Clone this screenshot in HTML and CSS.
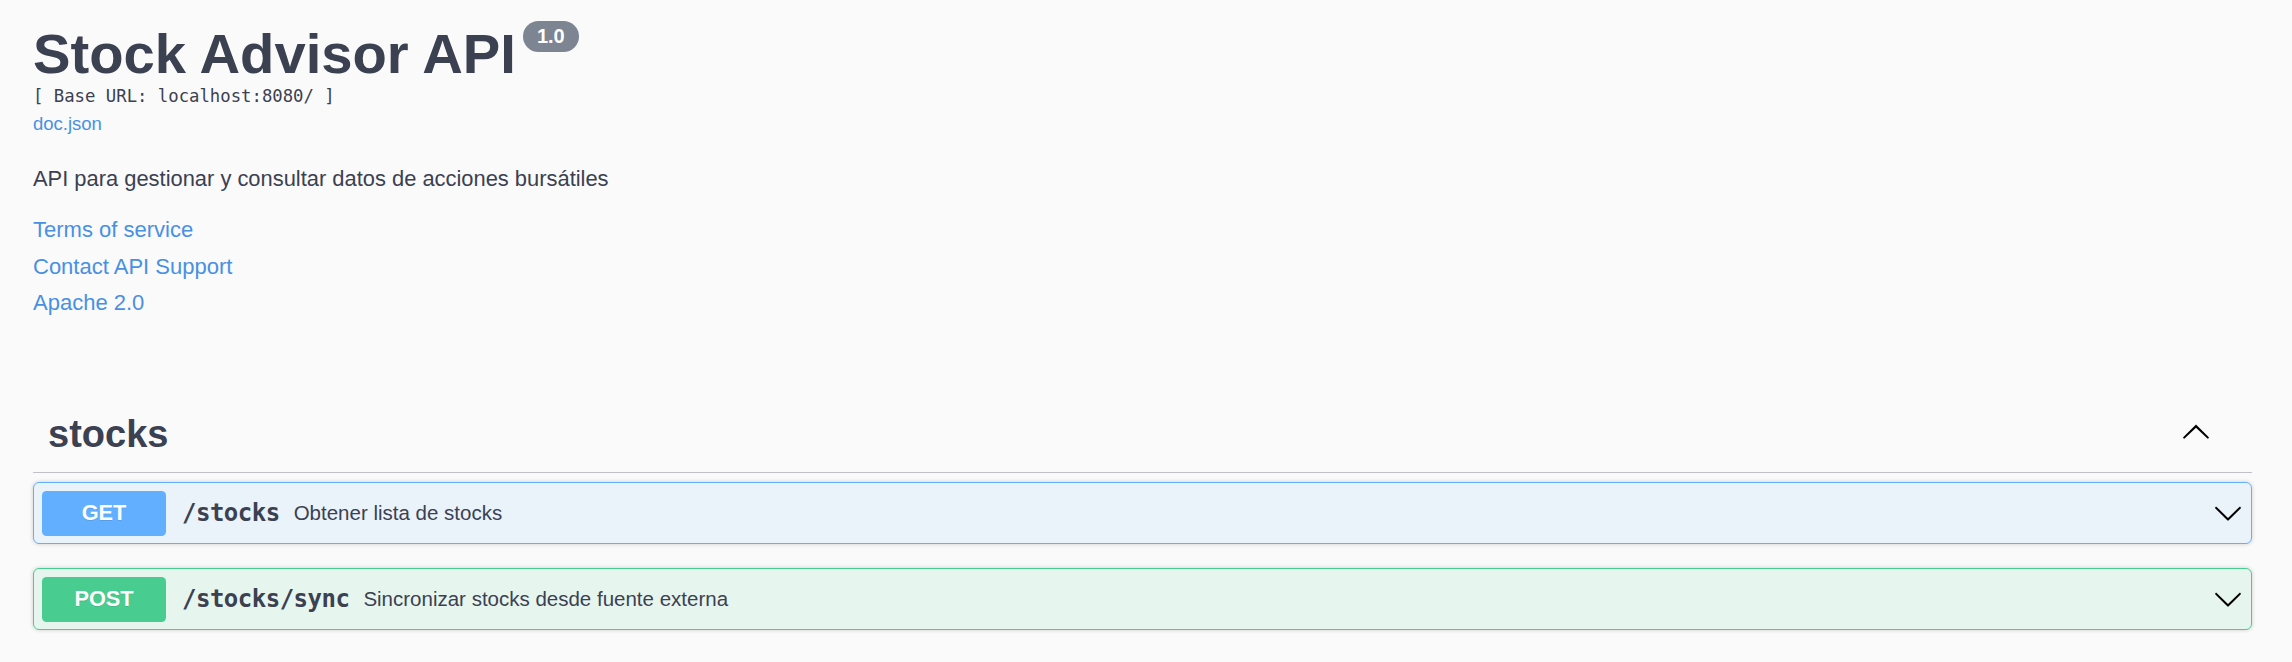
FILE: index.html
```html
<!DOCTYPE html>
<html lang="es">
<head>
<meta charset="utf-8">
<title>Stock Advisor API</title>
<link rel="stylesheet" href="styles.css">
</head>
<body>
<div class="page">
  <section class="info">
    <h2 class="title"><span class="title-text">Stock Advisor API</span><span class="version">1.0</span></h2>
    <pre class="base-url">[ Base URL: localhost:8080/ ]</pre>
    <a class="spec-link" href="#">doc.json</a>
    <p class="description">API para gestionar y consultar datos de acciones bursátiles</p>
    <div class="info-links">
      <a href="#">Terms of service</a>
      <a href="#">Contact API Support</a>
      <a href="#">Apache 2.0</a>
    </div>
  </section>

  <section class="tag-section">
    <h3 class="tag">
      <span class="tag-name">stocks</span>
      <button class="expand" type="button" aria-label="Collapse">
        <svg class="arrow" viewBox="0 0 20 20"><path d="M17.418 14.908c.272.268.709.268.979 0s.271-.701 0-.969l-7.908-7.83c-.27-.268-.707-.268-.979 0l-7.908 7.83c-.27.268-.27.701 0 .969.271.268.709.268.979 0L10 7.767l7.418 7.141z"/></svg>
      </button>
    </h3>

    <div class="opblock opblock-get">
      <span class="method">GET</span>
      <span class="path">/stocks</span>
      <span class="summary-desc">Obtener lista de stocks</span>
      <svg class="arrow" viewBox="0 0 20 20"><path d="M17.418 6.109c.272-.268.709-.268.979 0s.271.701 0 .969l-7.908 7.83c-.27.268-.707.268-.979 0l-7.908-7.83c-.27-.268-.27-.701 0-.969.271-.268.709-.268.979 0L10 13.25l7.418-7.141z"/></svg>
    </div>

    <div class="opblock opblock-post">
      <span class="method">POST</span>
      <span class="path">/stocks/sync</span>
      <span class="summary-desc">Sincronizar stocks desde fuente externa</span>
      <svg class="arrow" viewBox="0 0 20 20"><path d="M17.418 6.109c.272-.268.709-.268.979 0s.271.701 0 .969l-7.908 7.83c-.27.268-.707.268-.979 0l-7.908-7.83c-.27-.268-.27-.701 0-.969.271-.268.709-.268.979 0L10 13.25l7.418-7.141z"/></svg>
    </div>
  </section>
</div>
</body>
</html>
```

FILE: styles.css
```css
* {
  box-sizing: border-box;
}

body {
  margin: 0;
  background: #fafafa;
  font-family: "Liberation Sans", Arial, sans-serif;
  color: #3b4151;
}

.page {
  padding: 22px 40px 30px 33px;
}

.title {
  margin: 0;
  display: flex;
  align-items: flex-start;
  font-size: 56.2px;
  line-height: 64px;
  font-weight: 700;
  color: #3b4151;
}

.version {
  margin: -1px 0 0 7px;
  height: 31px;
  padding: 0 14px;
  border-radius: 16px;
  background: #7d8492;
  color: #fff;
  font-size: 20px;
  line-height: 31px;
  font-weight: 700;
}

.base-url {
  margin: 0;
  font-family: "DejaVu Sans Mono", monospace;
  font-size: 17.3px;
  line-height: 20px;
  color: #3b4151;
}

.spec-link {
  display: block;
  margin-top: 7px;
  width: max-content;
  font-size: 18.5px;
  line-height: 21px;
  color: #4990e2;
  text-decoration: none;
}

.description {
  margin: 32px 0 0;
  font-size: 21.9px;
  line-height: 26px;
  color: #3b4151;
}

.info-links {
  margin-top: 20px;
  display: flex;
  flex-direction: column;
  align-items: flex-start;
}

.info-links a {
  font-size: 22px;
  line-height: 36.7px;
  color: #4990e2;
  text-decoration: none;
}

.tag-section {
  margin-top: 76px;
}

.tag {
  margin: 0;
  display: flex;
  align-items: center;
  justify-content: space-between;
  padding: 15px 30px 17px 15px;
  border-bottom: 1px solid rgba(59, 65, 81, 0.3);
  font-size: 38px;
  line-height: 42px;
  font-weight: 700;
  color: #3b4151;
}

.expand {
  display: flex;
  margin: 0 11px 6px 0;
  padding: 0;
  border: 0;
  background: none;
}

.arrow {
  width: 30px;
  height: 30px;
  flex: none;
  fill: #000;
}

.opblock {
  display: flex;
  align-items: center;
  margin-top: 9px;
  padding: 7.5px 8px;
  border: 1px solid;
  border-radius: 6px;
  box-shadow: 0 0 4.5px rgba(0, 0, 0, 0.19);
}

.opblock + .opblock {
  margin-top: 24px;
}

.opblock-get {
  border-color: #61affe;
  background: rgba(97, 175, 254, 0.1);
}

.opblock-post {
  border-color: #49cc90;
  background: rgba(73, 204, 144, 0.1);
}

.method {
  display: flex;
  align-items: center;
  justify-content: center;
  flex: none;
  width: 124px;
  height: 45px;
  border-radius: 4.5px;
  color: #fff;
  font-size: 21.7px;
  font-weight: 700;
  text-shadow: 0 1px 0 rgba(0, 0, 0, 0.1);
}

.opblock-get .method {
  background: #61affe;
}

.opblock-post .method {
  background: #49cc90;
}

.path {
  padding: 0 14px 0 16px;
  font-family: "DejaVu Sans Mono", monospace;
  font-weight: 700;
  font-size: 24px;
  letter-spacing: -0.5px;
  color: #3b4151;
}

.summary-desc {
  flex: 1;
  font-size: 20.5px;
  color: #3b4151;
}
```
